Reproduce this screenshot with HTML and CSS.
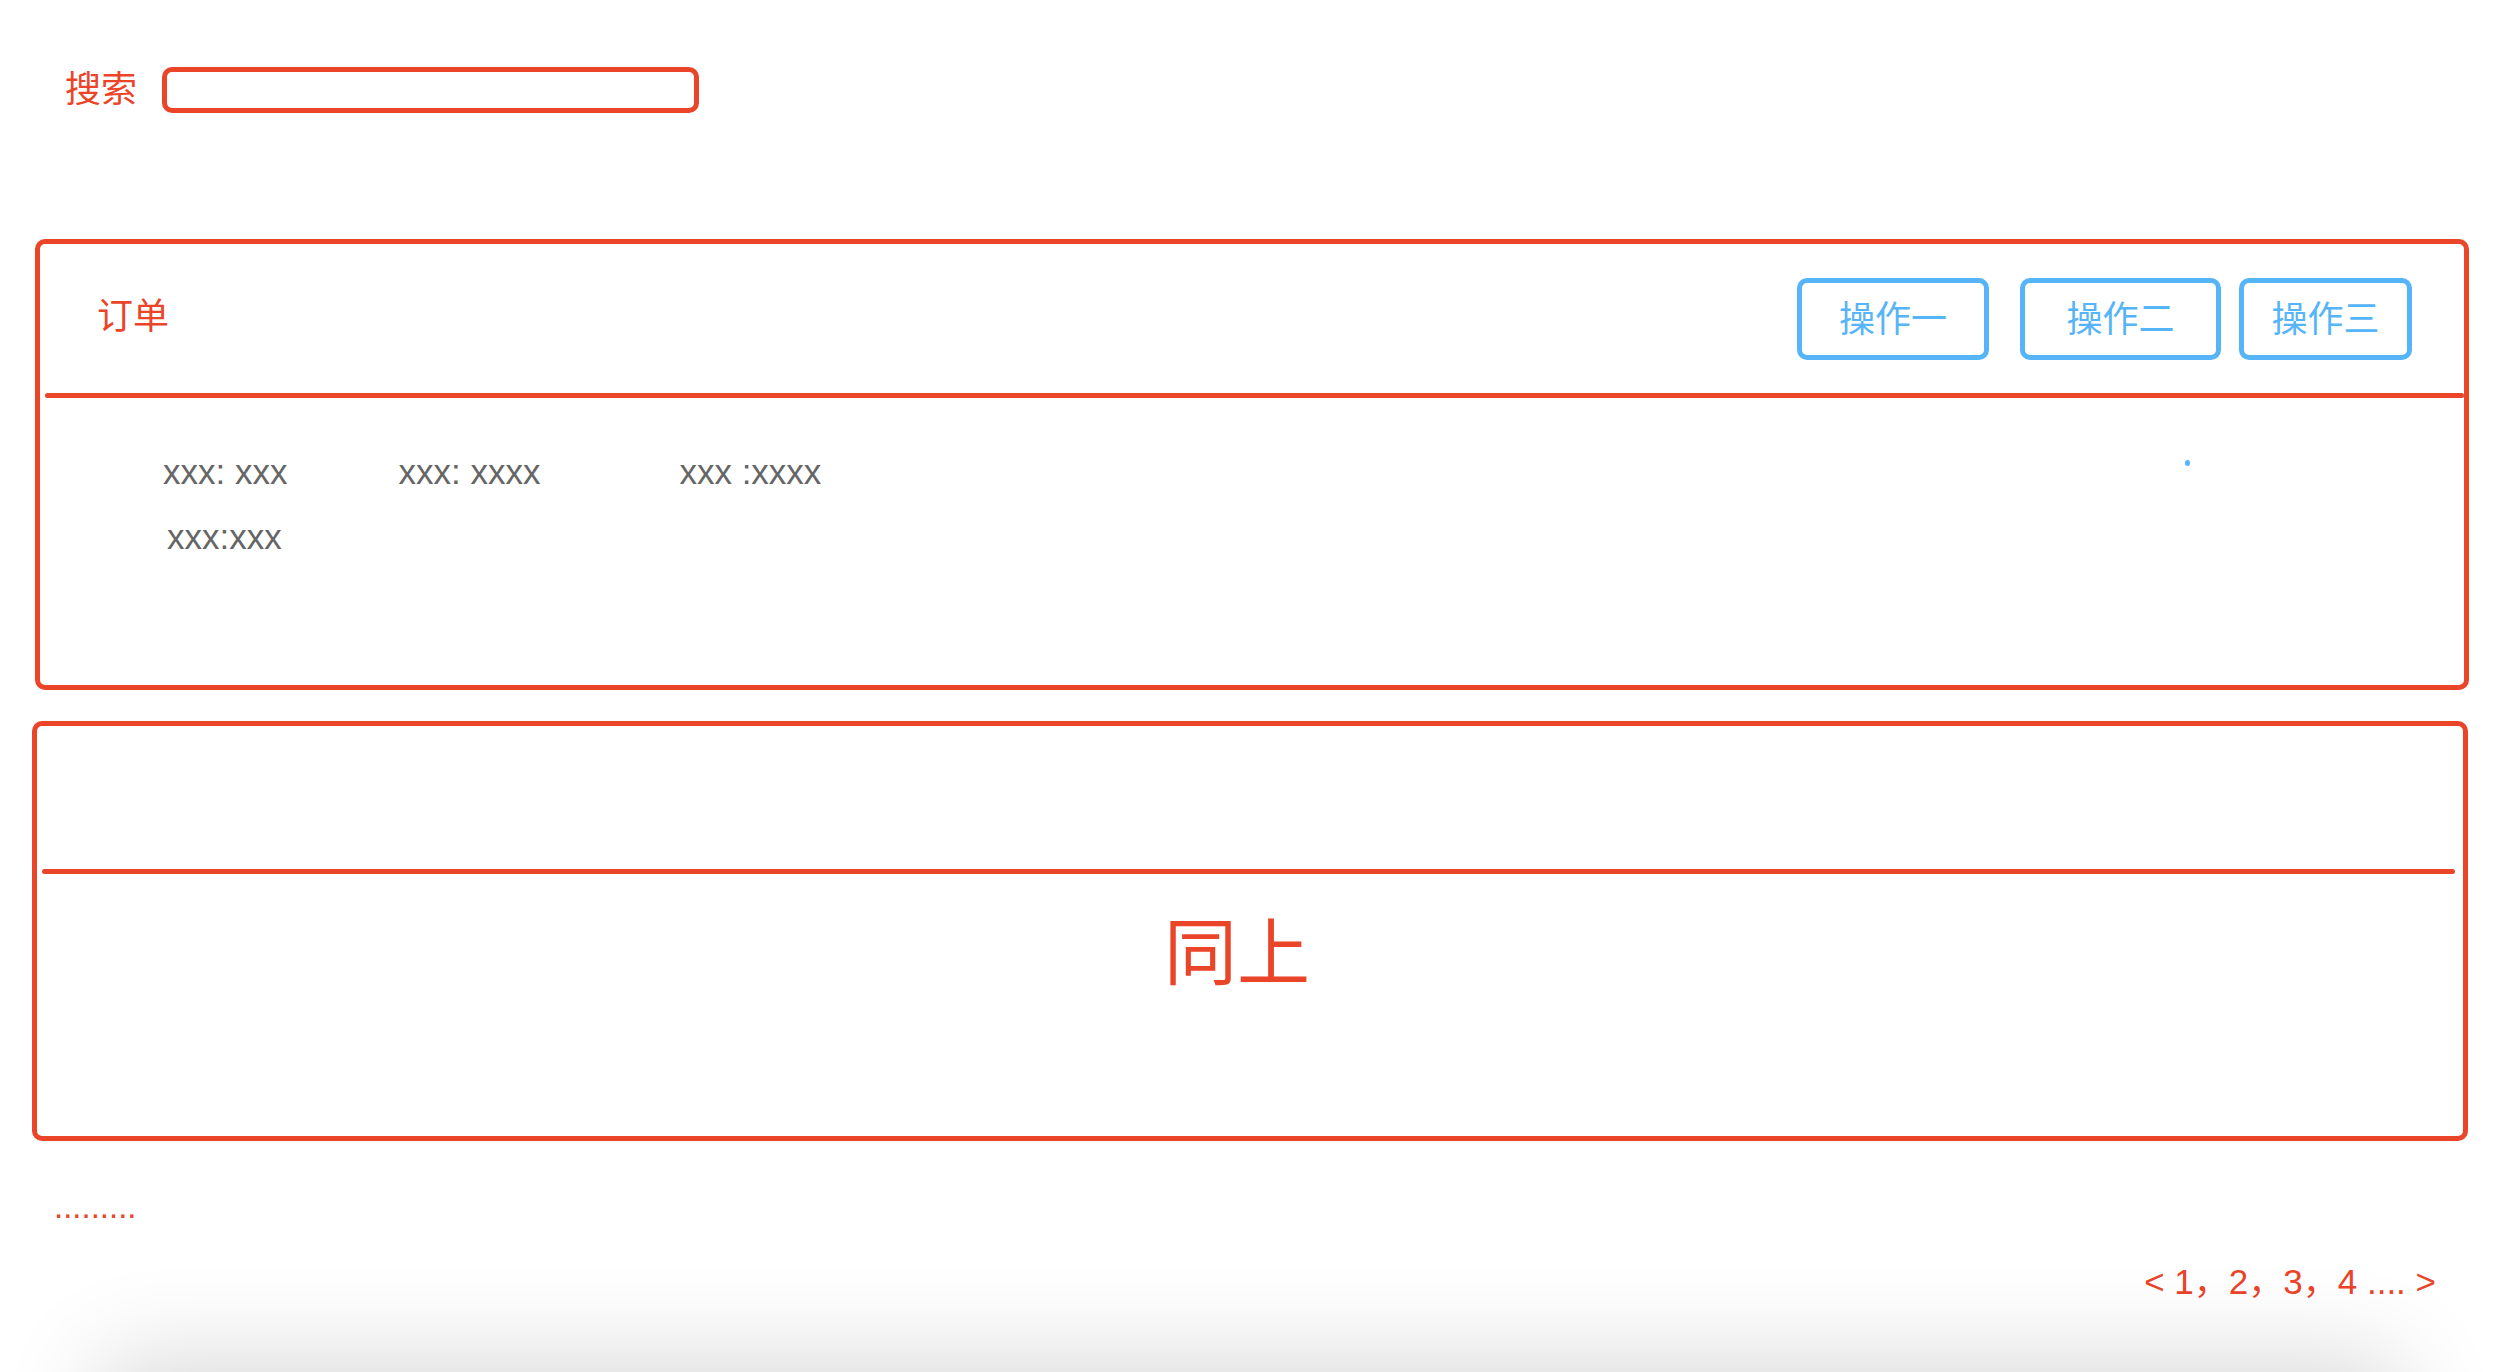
FILE: index.html
```html
<!DOCTYPE html>
<html lang="zh">
  <head>
    <meta charset="UTF-8" />
    <meta name="viewport" content="width=device-width, initial-scale=1.0" />
    <title>订单列表</title>
    <link rel="stylesheet" href="styles.css">
  </head>
  <body>
    <div class="page">
      <div class="search-bar">
        <label for="keyword" class="search-label">搜索</label>
        <input type="text" id="keyword" class="search-input" />
      </div>

      <div class="order-card">
        <div class="card-header">
          <span class="card-title">订单</span>
          <div class="actions">
            <button class="op-btn">操作一</button>
            <button class="op-btn op-btn-wide">操作二</button>
            <button class="op-btn op-btn-narrow">操作三</button>
          </div>
        </div>
        <div class="divider"></div>
        <div class="card-body">
          <div class="field-row">
            <span class="field">xxx: xxx</span>
            <span class="field">xxx: xxxx</span>
            <span class="field field-far">xxx :xxxx</span>
          </div>
          <div class="field-row field-row-second">
            <span class="field">xxx:xxx</span>
          </div>
          <span class="stray-dot"></span>
        </div>
      </div>

      <div class="order-card order-card-copy">
        <div class="card-header"></div>
        <div class="divider"></div>
        <div class="card-body">
          <div class="same-text">同上</div>
        </div>
      </div>

      <div class="more">.........</div>
      <div class="pager">&lt; 1，2，3，4 .... &gt;</div>
    </div>
    <div class="bottom-shade"></div>
  </body>
</html>
```

FILE: styles.css
```css
* {
  margin: 0;
  padding: 0;
  box-sizing: border-box;
}

body {
  font-family: "Liberation Sans", "Noto Sans CJK SC", sans-serif;
  background-color: #fff;
  color: #ea4429;
}

/* 搜索 */
.search-bar {
  display: flex;
  align-items: center;
  margin-top: 67px;
  padding-left: 65px;
}

.search-label {
  font-size: 36px;
  line-height: 46px;
  color: #ea4429;
  margin-right: 25px;
}

.search-input {
  width: 537px;
  height: 46px;
  border: 5px solid #ea4429;
  border-radius: 10px;
  outline: none;
  background: #fff;
}

/* 订单卡片 */
.order-card {
  margin: 126px 31px 0 35px;
  border: 5px solid #ea4429;
  border-radius: 10px;
}

.order-card-copy {
  margin: 31px 32px 0 32px;
}

.card-header {
  display: flex;
  align-items: center;
  justify-content: space-between;
  height: 149px;
  padding: 0 52px 0 57px;
}

.order-card-copy .card-header {
  height: 143px;
}

.card-title {
  font-size: 36px;
  color: #ea4429;
  margin-top: -12px;
}

.actions {
  display: flex;
  align-items: center;
}

.op-btn {
  width: 192px;
  height: 82px;
  padding-bottom: 5px;
  border: 5px solid #56b4f8;
  border-radius: 10px;
  background: #fff;
  color: #56b4f8;
  font-family: "Noto Sans CJK SC", sans-serif;
  font-size: 36px;
  cursor: pointer;
}

.op-btn-wide {
  width: 201px;
  margin-left: 31px;
}

.op-btn-narrow {
  width: 173px;
  margin-left: 18px;
}

.divider {
  height: 5px;
  margin-left: 5px;
  background-color: #ea4429;
  border-radius: 3px;
}

.order-card-copy .divider {
  margin-right: 8px;
}

.card-body {
  position: relative;
  height: 287px;
  padding: 54px 0 0 123px;
}

.order-card-copy .card-body {
  height: 262px;
  padding: 36px 26px 0 0;
}

.field-row {
  display: flex;
}

.field-row-second {
  margin-top: 25px;
  padding-left: 4px;
}

.field {
  font-size: 35px;
  line-height: 40px;
  color: #666;
  white-space: pre;
}

.field + .field {
  margin-left: 111px;
}

.field-far {
  margin-left: 139px !important;
}

.stray-dot {
  position: absolute;
  top: 62px;
  right: 274px;
  width: 5px;
  height: 6px;
  border-radius: 50%;
  background-color: #56b4f8;
}

.same-text {
  text-align: center;
  font-family: "Noto Sans CJK SC", sans-serif;
  font-size: 73px;
  line-height: 74px;
  color: #ea4429;
}

/* 底部 */
.more {
  margin-top: 46px;
  padding-left: 54px;
  font-size: 33px;
  line-height: 40px;
}

.pager {
  margin-top: 35px;
  padding-right: 64px;
  text-align: right;
  font-size: 35px;
  line-height: 40px;
}

.bottom-shade {
  position: fixed;
  left: 110px;
  right: 110px;
  bottom: -220px;
  height: 220px;
  background: rgba(0, 0, 0, 0.12);
  box-shadow: 0 0 100px 10px rgba(0, 0, 0, 0.16);
}
```
